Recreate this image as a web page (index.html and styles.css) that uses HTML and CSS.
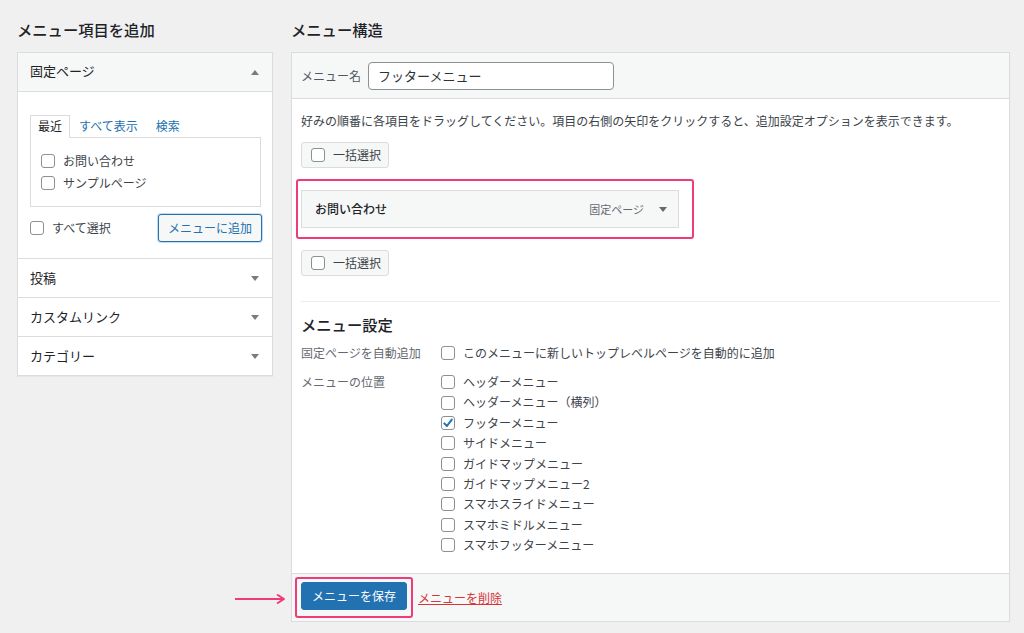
FILE: index.html
```html
<!DOCTYPE html>
<html lang="ja">
<head>
<meta charset="utf-8">
<title>メニュー</title>
<link rel="stylesheet" href="styles.css">
</head>
<body>
<div class="page">
  <div class="col-left">
    <h2 class="col-title">メニュー項目を追加</h2>
    <div class="accordion">
      <div class="acc-head acc-open">
        <span>固定ページ</span>
        <svg class="tri" width="8" height="5" viewBox="0 0 8 5"><path d="M0 5L4 0L8 5Z"/></svg>
      </div>
      <div class="acc-body">
        <div class="tabs">
          <span class="tab tab-active">最近</span>
          <span class="tab tab-link">すべて表示</span>
          <span class="tab tab-link">検索</span>
        </div>
        <div class="tab-panel">
          <div class="check-row"><span class="cb"></span><span>お問い合わせ</span></div>
          <div class="check-row"><span class="cb"></span><span>サンプルページ</span></div>
        </div>
        <div class="add-row">
          <div class="check-row"><span class="cb"></span><span>すべて選択</span></div>
          <span class="btn-secondary">メニューに追加</span>
        </div>
      </div>
      <div class="acc-head">
        <span>投稿</span>
        <svg class="tri" width="8" height="5" viewBox="0 0 8 5"><path d="M0 0L8 0L4 5Z"/></svg>
      </div>
      <div class="acc-head">
        <span>カスタムリンク</span>
        <svg class="tri" width="8" height="5" viewBox="0 0 8 5"><path d="M0 0L8 0L4 5Z"/></svg>
      </div>
      <div class="acc-head">
        <span>カテゴリー</span>
        <svg class="tri" width="8" height="5" viewBox="0 0 8 5"><path d="M0 0L8 0L4 5Z"/></svg>
      </div>
    </div>
  </div>

  <div class="col-right">
    <h2 class="col-title">メニュー構造</h2>
    <div class="menu-panel">
      <div class="menu-head">
        <span class="name-label">メニュー名</span>
        <span class="name-input">フッターメニュー</span>
      </div>
      <div class="menu-body">
        <p class="instructions">好みの順番に各項目をドラッグしてください。項目の右側の矢印をクリックすると、追加設定オプションを表示できます。</p>
        <div class="bulk-btn"><span class="cb"></span><span>一括選択</span></div>
        <div class="highlight-item">
          <div class="menu-item">
            <span class="item-title">お問い合わせ</span>
            <span class="item-type">固定ページ</span>
            <svg class="tri item-tri" width="8" height="5" viewBox="0 0 8 5"><path d="M0 0L8 0L4 5Z"/></svg>
          </div>
        </div>
        <div class="bulk-btn bulk-second"><span class="cb"></span><span>一括選択</span></div>
        <div class="separator"></div>
        <h3 class="settings-title">メニュー設定</h3>
        <div class="settings-row settings-first">
          <span class="settings-label">固定ページを自動追加</span>
          <div class="check-row"><span class="cb"></span><span>このメニューに新しいトップレベルページを自動的に追加</span></div>
        </div>
        <div class="settings-row settings-loc">
          <span class="settings-label">メニューの位置</span>
          <div class="loc-list">
            <div class="check-row"><span class="cb"></span><span>ヘッダーメニュー</span></div>
            <div class="check-row"><span class="cb"></span><span>ヘッダーメニュー（横列）</span></div>
            <div class="check-row"><span class="cb cb-checked"><svg width="12" height="12" viewBox="0 0 12 12"><path d="M2.3 6.4L4.9 9L9.8 2.6" fill="none" stroke="#2271b1" stroke-width="2" stroke-linecap="round" stroke-linejoin="round"/></svg></span><span>フッターメニュー</span></div>
            <div class="check-row"><span class="cb"></span><span>サイドメニュー</span></div>
            <div class="check-row"><span class="cb"></span><span>ガイドマップメニュー</span></div>
            <div class="check-row"><span class="cb"></span><span>ガイドマップメニュー2</span></div>
            <div class="check-row"><span class="cb"></span><span>スマホスライドメニュー</span></div>
            <div class="check-row"><span class="cb"></span><span>スマホミドルメニュー</span></div>
            <div class="check-row"><span class="cb"></span><span>スマホフッターメニュー</span></div>
          </div>
        </div>
      </div>
      <div class="menu-foot">
        <svg class="pointer-arrow" width="52" height="12" viewBox="0 0 52 12"><path d="M0 6H48" stroke="#ef3b7a" stroke-width="2"/><path d="M42 1.5L49 6L42 10.5" fill="none" stroke="#ef3b7a" stroke-width="2" stroke-linejoin="round"/></svg>
        <div class="highlight-save">
          <span class="btn-primary">メニューを保存</span>
        </div>
        <span class="delete-link">メニューを削除</span>
      </div>
    </div>
  </div>
</div>
</body>
</html>
```

FILE: styles.css
```css
* {
  box-sizing: border-box;
}

body {
  margin: 0;
  background: #f0f0f1;
  font-family: "Noto Sans CJK JP", "Noto Sans", sans-serif;
  color: #3c434a;
  font-size: 12px;
  line-height: 18px;
}

.page {
  display: flex;
  gap: 18px;
  padding: 19px 0 0 17px;
}

.col-left {
  width: 256px;
  flex: none;
}

.col-right {
  width: 719px;
  flex: none;
}

.col-title {
  margin: 0 0 13px;
  font-size: 15.3px;
  line-height: 20px;
  font-weight: 500;
  color: #1d2327;
}

/* left accordion */
.accordion {
  background: #fff;
  border: 1px solid #dcdcde;
  box-shadow: 0 1px 1px rgba(0, 0, 0, 0.04);
}

.acc-head {
  height: 39px;
  display: flex;
  align-items: center;
  justify-content: space-between;
  padding: 0 13px 0 12px;
  font-size: 13px;
  color: #1d2327;
  border-top: 1px solid #dcdcde;
}

.acc-open {
  border-top: 0;
  border-bottom: 1px solid #dcdcde;
  background: #f6f7f7;
}

.acc-open span {
  margin-top: -2px;
}

.tri {
  fill: #787c82;
  flex: none;
}

.acc-body {
  padding: 23px 11px 16px 12px;
}

.tabs {
  display: flex;
}

.tab {
  padding: 0 7px 2px;
  line-height: 19px;
  border: 1px solid transparent;
  border-bottom: 0;
}

.tab-active {
  border-color: #dcdcde;
  background: #fff;
  color: #1d2327;
  position: relative;
  z-index: 1;
  margin-bottom: -1px;
}

.tab-link {
  color: #2271b1;
  padding-left: 8px;
  padding-right: 8px;
}

.tab-panel {
  border: 1px solid #dcdcde;
  padding: 12px 10px 12px;
}

.check-row {
  display: flex;
  align-items: center;
  gap: 8px;
  line-height: 22px;
}

.cb {
  width: 14px;
  height: 14px;
  flex: none;
  border: 1px solid #8c8f94;
  border-radius: 3px;
  background: #fff;
  display: flex;
  align-items: center;
  justify-content: center;
}

.add-row {
  margin-top: 7px;
  display: flex;
  align-items: center;
  justify-content: space-between;
}

.btn-secondary {
  height: 28px;
  line-height: 26px;
  padding: 0 9px;
  border: 1px solid #2271b1;
  border-radius: 3px;
  background: #f6f7f7;
  color: #2271b1;
  margin-right: -1px;
  box-shadow: 0 0 0 1px rgba(34, 113, 177, 0.25);
}

/* right panel */
.menu-panel {
  background: #fff;
  border: 1px solid #dcdcde;
  box-shadow: 0 1px 1px rgba(0, 0, 0, 0.04);
}

.menu-head {
  height: 46px;
  background: #f6f7f7;
  border-bottom: 1px solid #dcdcde;
  display: flex;
  align-items: center;
  gap: 7px;
  padding: 0 9px;
}

.name-label {
  color: #50575e;
}

.name-input {
  width: 246px;
  height: 28px;
  border: 1px solid #8c8f94;
  border-radius: 4px;
  background: #fff;
  padding: 0 9px;
  font-size: 13px;
  line-height: 26px;
  color: #2c3338;
}

.menu-body {
  padding: 13px 9px 18px;
}

.instructions {
  margin: 0;
  line-height: 18px;
}

.bulk-btn {
  margin-top: 12px;
  width: 88px;
  height: 26px;
  display: flex;
  align-items: center;
  gap: 8px;
  padding: 0 7px 0 9px;
  border: 1px solid #dcdcde;
  border-radius: 3px;
  background: #f6f7f7;
  color: #3c434a;
}

.bulk-second {
  margin-top: 11px;
}

.highlight-item {
  margin: 11px 0 0 -5px;
  width: 398px;
  border: 2px solid #ef3b7a;
  border-radius: 3px;
  padding: 9px 13px 9px 3px;
}

.menu-item {
  height: 38px;
  display: flex;
  align-items: center;
  border: 1px solid #dcdcde;
  background: #f6f7f7;
  padding: 0 11px 0 13px;
}

.item-title {
  flex: 1;
  font-weight: 500;
  color: #1d2327;
}

.item-type {
  font-size: 11px;
  color: #646970;
}

.item-tri {
  margin-left: 15px;
  fill: #646970;
}

.separator {
  margin-top: 25px;
  border-top: 1px solid #ececed;
}

.settings-title {
  margin: 11px 0 0;
  font-size: 15.3px;
  line-height: 22px;
  font-weight: 500;
  color: #1d2327;
}

.settings-row {
  display: grid;
  grid-template-columns: 140px 1fr;
}

.settings-first {
  margin-top: 8px;
}

.settings-first .check-row,
.settings-first .settings-label {
  line-height: 20px;
}

.settings-loc {
  margin-top: 9px;
}

.settings-label {
  color: #646970;
  line-height: 20.375px;
}

.loc-list .check-row {
  line-height: 20.375px;
}

.menu-foot {
  position: relative;
  border-top: 1px solid #dcdcde;
  background: #f6f7f7;
  padding: 3px 9px 3px 3px;
  display: flex;
  align-items: center;
}

.pointer-arrow {
  position: absolute;
  left: -57px;
  top: 19px;
}

.highlight-save {
  border: 2px solid #ef3b7a;
  border-radius: 3px;
  padding: 3px 4px 6px 4px;
}

.btn-primary {
  display: block;
  height: 28px;
  line-height: 26px;
  padding: 0 10px;
  border: 1px solid #2271b1;
  border-radius: 3px;
  background: #2271b1;
  color: #fff;
}

.delete-link {
  margin-left: 5px;
  margin-top: 1px;
  color: #d63638;
  text-decoration: underline;
}
```
